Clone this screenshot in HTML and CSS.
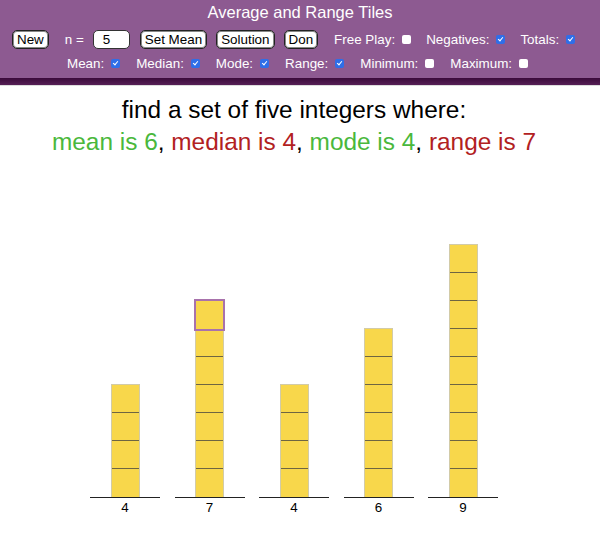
FILE: index.html
```html
<!DOCTYPE html>
<html>
<head>
<meta charset="utf-8">
<link rel="stylesheet" href="styles.css">
</head>
<body>
<header class="bar">
  <div class="title">Average and Range Tiles</div>
  <div class="row row1">
    <button class="btn">New</button>
    <span class="lbl n-lbl">n =</span>
    <span class="num">5</span>
    <button class="btn">Set Mean</button>
    <button class="btn">Solution</button>
    <button class="btn">Don</button>
    <span class="opt">Free Play: <span class="cb"></span></span>
    <span class="opt">Negatives: <span class="cb on"></span></span>
    <span class="opt">Totals: <span class="cb on"></span></span>
  </div>
  <div class="row row2">
    <span class="opt">Mean: <span class="cb on"></span></span>
    <span class="opt">Median: <span class="cb on"></span></span>
    <span class="opt">Mode: <span class="cb on"></span></span>
    <span class="opt">Range: <span class="cb on"></span></span>
    <span class="opt">Minimum: <span class="cb"></span></span>
    <span class="opt">Maximum: <span class="cb"></span></span>
  </div>
</header>
<div class="shadow"></div>
<main>
  <p class="q1">find a set of five integers where:</p>
  <p class="q2"><span class="g">mean is 6</span>, <span class="r">median is 4</span>, <span class="g">mode is 4</span>, <span class="r">range is 7</span></p>
  <div class="chart">
    <div class="col">
      <div class="stack"><div class="tile"></div><div class="tile"></div><div class="tile"></div><div class="tile"></div></div>
      <div class="base">4</div>
    </div>
    <div class="col">
      <div class="stack"><div class="tile sel"></div><div class="tile"></div><div class="tile"></div><div class="tile"></div><div class="tile"></div><div class="tile"></div><div class="tile"></div></div>
      <div class="base">7</div>
    </div>
    <div class="col">
      <div class="stack"><div class="tile"></div><div class="tile"></div><div class="tile"></div><div class="tile"></div></div>
      <div class="base">4</div>
    </div>
    <div class="col">
      <div class="stack"><div class="tile"></div><div class="tile"></div><div class="tile"></div><div class="tile"></div><div class="tile"></div><div class="tile"></div></div>
      <div class="base">6</div>
    </div>
    <div class="col">
      <div class="stack"><div class="tile"></div><div class="tile"></div><div class="tile"></div><div class="tile"></div><div class="tile"></div><div class="tile"></div><div class="tile"></div><div class="tile"></div><div class="tile"></div></div>
      <div class="base">9</div>
    </div>
  </div>
</main>
</body>
</html>
```

FILE: styles.css
```css
html, body {
  margin: 0;
  padding: 0;
  background: #fff;
  font-family: "Liberation Sans", Arial, sans-serif;
}
.bar {
  background: #8d5a91;
  height: 78px;
  color: #fff;
  box-sizing: border-box;
  padding-top: 3px;
}
.title {
  text-align: center;
  font-size: 16.5px;
  line-height: 19px;
}
.row {
  display: flex;
  align-items: center;
  font-size: 13.4px;
}
.row1 {
  margin-top: 8px;
  padding-left: 12px;
  height: 19px;
}
.row2 {
  margin-top: 5px;
  padding-left: 67px;
  height: 19px;
}
.btn {
  font-family: "Liberation Sans", Arial, sans-serif;
  font-size: 13.4px;
  background: #fff;
  color: #000;
  border: 1px solid #222;
  border-radius: 5px;
  height: 19px;
  padding: 0 4px;
  margin: 0 9px 0 0;
  line-height: 17px;
  box-shadow: inset 0 0 0 1px #888;
}
.n-lbl {
  margin-left: 7px;
  margin-right: 9px;
}
.num {
  display: inline-block;
  width: 37px;
  height: 19px;
  box-sizing: border-box;
  background: #fff;
  color: #000;
  border: 1px solid #333;
  border-radius: 5px;
  padding-left: 9px;
  line-height: 17px;
  margin-right: 10px;
}
.opt {
  display: inline-flex;
  align-items: center;
  margin-left: 7px;
  margin-right: 8px;
}
.row2 .opt {
  margin-left: 0;
  margin-right: 16px;
}
.cb {
  display: inline-block;
  width: 9px;
  height: 9px;
  box-sizing: border-box;
  background: #fff;
  border-radius: 2px;
  margin-left: 7px;
  position: relative;
}
.cb.on {
  background: #2f6ee8;
}
.cb.on::after {
  content: "";
  position: absolute;
  left: 3px;
  top: 1px;
  width: 2px;
  height: 4px;
  border: solid #fff;
  border-width: 0 1.5px 1.5px 0;
  transform: rotate(40deg);
}
.shadow {
  height: 7px;
  background: linear-gradient(#3a0a3a, #561f56);
  border-bottom: 1px solid #ddd;
}
main {
  width: 588px;
  text-align: center;
}
.q1 {
  margin: 8px 0 0;
  font-size: 24.4px;
  line-height: 32px;
  color: #000;
}
.q2 {
  margin: 0;
  font-size: 24.4px;
  line-height: 32px;
  color: #000;
}
.g { color: #4ab83c; }
.r { color: #b2211f; }
.chart {
  display: grid;
  grid-template-columns: repeat(5, 70px);
  column-gap: 14.5px;
  align-items: end;
  margin: 0 0 0 90px;
  height: 360px;
}
.col {
  display: flex;
  flex-direction: column;
  align-items: center;
}
.stack {
  display: flex;
  flex-direction: column;
  width: 29px;
  border: 1px solid #d2cba8;
  border-bottom: none;
  box-sizing: border-box;
}
.tile {
  height: 28px;
  background: #f8d74b;
  border-bottom: 1px solid #6e6542;
  box-sizing: border-box;
}
.tile:last-child {
  border-bottom: none;
}
.tile.sel {
  outline: 2px solid #a872ac;
  outline-offset: -1px;
  position: relative;
  margin: -1px;
  height: 30px;
}
.base {
  width: 70px;
  border-top: 1px solid #222;
  font-size: 13.4px;
  line-height: 20px;
  color: #000;
}
```
